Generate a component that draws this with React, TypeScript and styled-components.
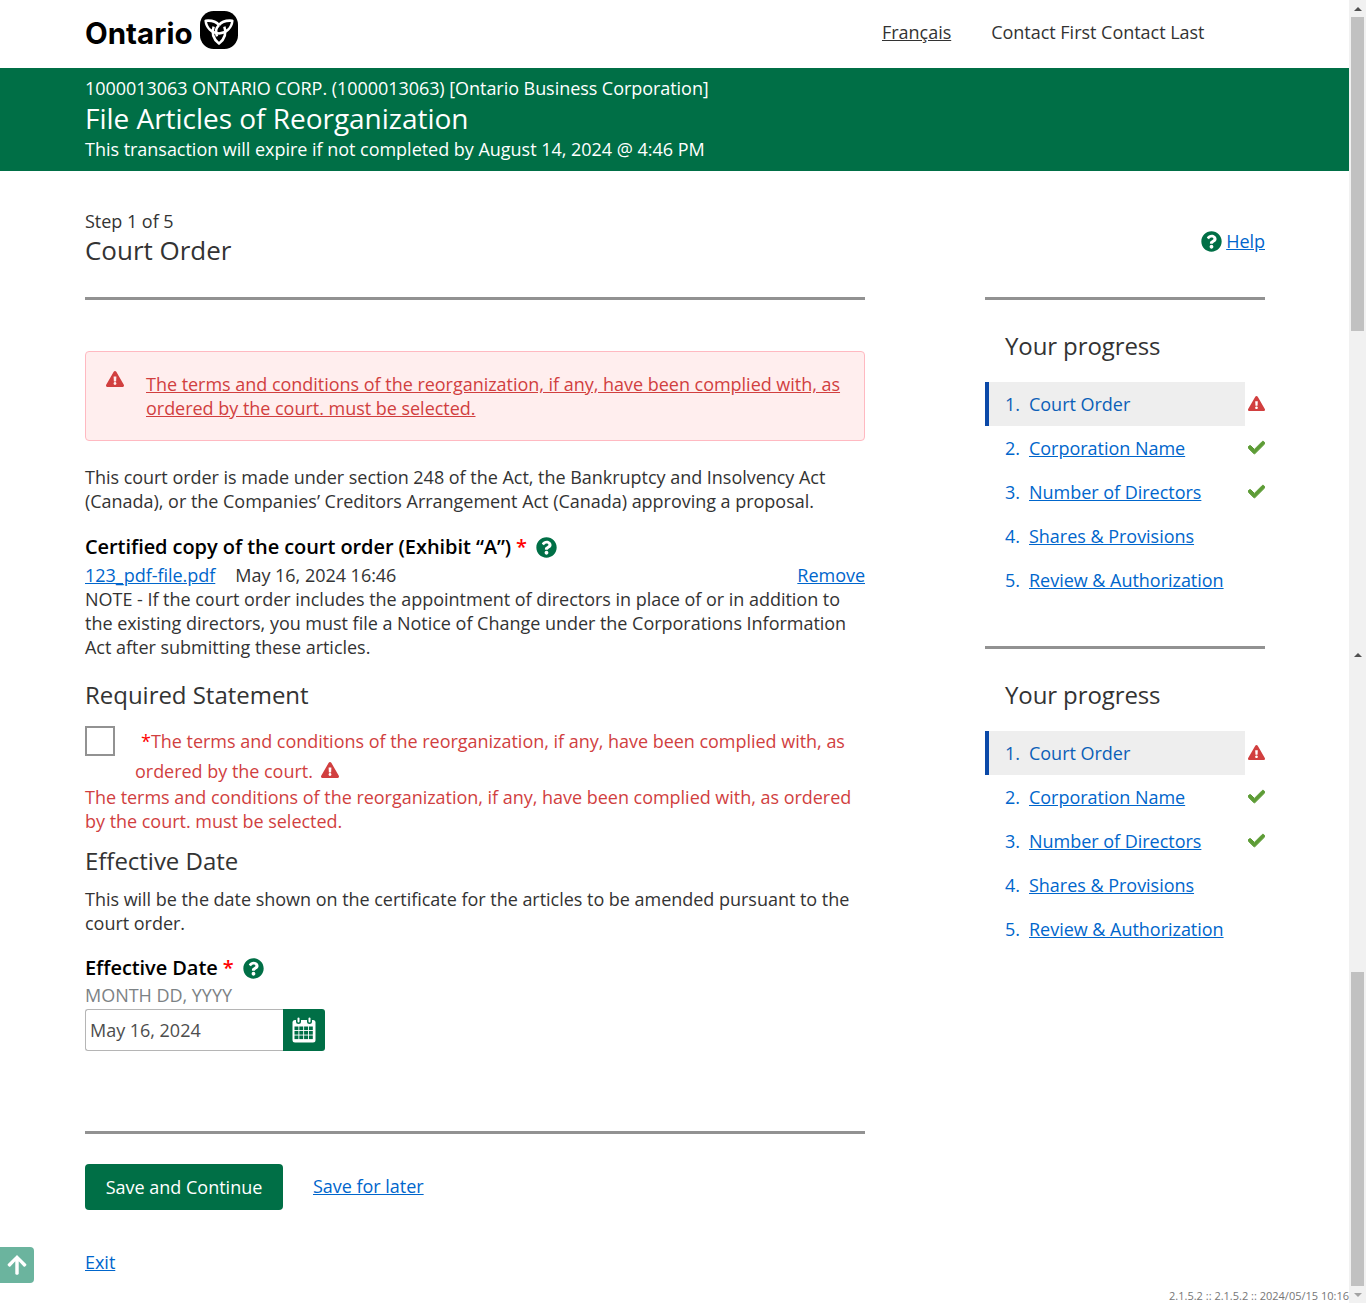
import React from "react";
import styled, {createGlobalStyle} from "styled-components";
import {FaArrowUp, FaCheck, FaExclamationTriangle, FaQuestionCircle} from "react-icons/fa";

const GlobalStyle = createGlobalStyle`
  html, body {
    margin: 0;
    padding: 0;
    background: #FFFFFF;
    overflow: hidden;
  }

  body {
    font-family: 'Open Sans', sans-serif;
    font-size: 18px;
    line-height: 24px;
    letter-spacing: -0.025px;
    color: #333333;
  }

  a {
    color: #0066cc;
  }
`

const Page = styled('div')`
  position: relative;
  display: flex;
  width: 1366px;
  height: 1303px;
  overflow: hidden;
`

const Main = styled('div')`
  width: 1349px;
  flex: none;
`

const ScrollTrack = styled('div')`
  width: 17px;
  flex: none;
  height: 1303px;
  background: #f1f1f1;
  display: flex;
  flex-direction: column;
`

const ScrollArrow = styled('div')<{ $down?: boolean }>`
  height: 17px;
  flex: none;
  display: flex;
  align-items: center;
  justify-content: center;

  &::before {
    content: '';
    border-left: 4px solid transparent;
    border-right: 4px solid transparent;
    ${props => props.$down ? 'border-top: 4px solid #a3a3a3;' : 'border-bottom: 4px solid #505050;'}
  }
`

const ScrollThumb = styled('div')`
  height: 314px;
  flex: none;
  margin: 0 2px;
  background: #c1c1c1;
`

const ScrollGap = styled('div')<{ $height: number }>`
  height: ${props => props.$height}px;
  flex: none;
`

const Header = styled('header')`
  height: 68px;
  padding-left: 85px;
  display: flex;
  align-items: center;
  justify-content: space-between;
  box-sizing: border-box;
`

const Logo = styled('div')`
  display: flex;
  align-items: center;
  gap: 7px;
  margin-top: -8px;
`

const LogoText = styled('span')`
  font-family: 'Inter', sans-serif;
  font-weight: 700;
  font-size: 29.5px;
  line-height: 40px;
  letter-spacing: 0;
  color: #000000;
  margin-top: 5px;
`

const HeaderLinks = styled('nav')`
  display: flex;
  gap: 40px;
  padding-right: 144.5px;
  margin-top: -4px;
`

const LangLink = styled('a')`
  color: #333333;
`

const Banner = styled('div')`
  height: 103px;
  background: #006f46;
  color: #FFFFFF;
  padding: 8px 0 0 85px;
  box-sizing: border-box;
`

const BannerLine = styled('div')<{ $tight?: boolean }>`
  line-height: 24px;
  letter-spacing: ${props => props.$tight ? '-0.05px' : '-0.025px'};
`

const BannerTitle = styled('div')`
  font-size: 28px;
  line-height: 37px;
`

const Content = styled('div')`
  display: grid;
  grid-template-columns: 780px 280px;
  column-gap: 120px;
  padding-left: 85px;
`

const StepHead = styled('div')`
  grid-column: 1 / 3;
  display: flex;
  justify-content: space-between;
  align-items: center;
  padding-top: 39px;
  height: 126px;
  box-sizing: border-box;
`

const StepTitle = styled('h1')`
  margin: 0;
  font-size: 26px;
  line-height: 34px;
  font-weight: 400;
`

const StepText = styled('div')`
  margin-bottom: 31px;
`

const HelpLink = styled('div')`
  display: flex;
  align-items: center;
  gap: 4px;
  margin-bottom: 25px;
`

const Rule = styled('hr')<{ $top?: number }>`
  margin: ${props => props.$top ?? 0}px 0 0;
  border: none;
  height: 3px;
  background: #929292;
`

const AlertIcon = styled(FaExclamationTriangle)`
  flex: none;
  width: 18px;
  height: 18px;
  margin: -2px 1px 0 0;
  color: #d13f3f;
`

const Alert = styled('div')`
  margin-top: 51px;
  height: 90px;
  box-sizing: border-box;
  display: flex;
  gap: 21px;
  padding: 20px 20px 0;
  background: #ffeeee;
  border: 1px solid #ffb9c1;
  border-radius: 4px;
`

const AlertLink = styled('a')`
  color: #d13f3f;
  text-decoration-color: #d13f3f;
`

const Paragraph = styled('p')<{ $top?: number }>`
  margin: ${props => props.$top ?? 0}px 0 0;
`

const FieldLabel = styled('div')<{ $top: number }>`
  margin-top: ${props => props.$top}px;
  display: flex;
  align-items: center;
  height: 28px;
  font-size: 20px;
  line-height: 24px;
  font-weight: 600;
  letter-spacing: -0.07px;
  color: #000000;
`

const Star = styled('span')`
  color: #ff0000;
  margin: 0 9px 0 5px;
`

const FileRow = styled('div')`
  display: flex;
  gap: 20px;
  margin-top: 2px;
`

const RemoveLink = styled('a')`
  margin-left: auto;
`

const SectionTitle = styled('h2')<{ $top: number }>`
  margin: ${props => props.$top}px 0 0;
  font-size: 24px;
  line-height: 32px;
  font-weight: 400;
`

const CheckRow = styled('div')`
  display: flex;
  margin-top: 15px;
  margin-bottom: -1px;
`

const CheckBoxMark = styled('span')`
  width: 30px;
  height: 30px;
  flex: none;
  box-sizing: border-box;
  border: 2px solid #929292;
  background: #FFFFFF;
`

const CheckText = styled('div')`
  color: #d13f3f;
  line-height: 30px;
  padding-left: 20px;
  text-indent: 6px;
`

const InlineStar = styled('span')`
  color: #ff0000;
`

const InlineIcon = styled('span')`
  display: inline-block;
  text-indent: 0;
  margin-left: 8px;
  vertical-align: -1px;
  color: #d13f3f;
  font-size: 18px;
  line-height: 18px;
`

const ErrorText = styled('div')`
  color: #d13f3f;
  line-height: 24px;
`

const DateHint = styled('div')`
  color: #7c8285;
  line-height: 26px;
  margin-bottom: 1px;
`

const DateField = styled('div')`
  display: flex;
  width: 240px;
  height: 42px;
`

const DateValue = styled('div')`
  flex: 1;
  box-sizing: border-box;
  border: 1px solid #b5b5b5;
  border-right: none;
  border-radius: 3px 0 0 3px;
  padding: 8px 4px;
  color: #4d4d4d;
`

const DateButton = styled('div')`
  width: 42px;
  background: #006f46;
  border-radius: 0 3px 3px 0;
  display: flex;
  align-items: center;
  justify-content: center;
`

const SaveRow = styled('div')`
  margin-top: 30px;
  display: flex;
  align-items: center;
  gap: 30px;
`

const SaveLink = styled('a')`
  margin-bottom: 2px;
`

const SaveButton = styled('button')`
  height: 46px;
  width: 198px;
  border: none;
  border-radius: 4px;
  background: #006f46;
  color: #FFFFFF;
  font-family: 'Open Sans', sans-serif;
  font-size: 18px;
  font-weight: 500;
`

const ExitRow = styled('div')`
  margin-top: 40px;
`

const Side = styled('aside')`
  display: flex;
  flex-direction: column;
`

const ProgressPanel = styled('div')`
  height: 349px;
`

const ProgressTitle = styled('h2')`
  margin: 0;
  padding: 30px 0 0 20px;
  font-size: 24px;
  line-height: 32px;
  font-weight: 400;
  letter-spacing: -0.1px;
`

const ProgressList = styled('ol')`
  list-style: none;
  margin: 20px 0 0;
  padding: 0;
`

const ProgressItem = styled('li')`
  display: flex;
  align-items: center;
  height: 44px;
`

const ProgressLabel = styled('div')<{ $active?: boolean }>`
  width: 260px;
  height: 44px;
  box-sizing: border-box;
  display: flex;
  align-items: center;
  gap: 9px;
  padding-left: ${props => props.$active ? '16px' : '20px'};
  background: ${props => props.$active ? '#eeeeee' : 'transparent'};
  border-left: ${props => props.$active ? '4px solid #0b49a8' : 'none'};
  color: ${props => props.$active ? '#0b5fb8' : '#0066cc'};
`

const ProgressStatus = styled('span')<{ $error?: boolean }>`
  display: flex;
  justify-content: flex-end;
  width: 20px;
  font-size: 17px;
  padding-bottom: 2px;
  color: ${props => props.$error ? '#d13f3f' : '#5d9c36'};

  svg {
    stroke: currentColor;
    stroke-width: ${props => props.$error ? 0 : 30};
  }
`

const BackToTop = styled('div')`
  position: absolute;
  left: 0;
  top: 1247px;
  width: 34px;
  height: 36px;
  border-radius: 0 4px 4px 0;
  background: #6bb49e;
  color: #FFFFFF;
  display: flex;
  align-items: center;
  justify-content: center;
  font-size: 22px;
`

const VersionText = styled('div')`
  position: absolute;
  right: 17px;
  top: 1288px;
  font-size: 11px;
  line-height: 15px;
  letter-spacing: 0;
  color: #767676;
`

const steps = ['Court Order', 'Corporation Name', 'Number of Directors', 'Shares & Provisions', 'Review & Authorization'];

function Trillium() {
    return (
        <svg width="38" height="38" viewBox="0 0 39 39" aria-hidden="true">
            <rect width="39" height="39" rx="14" fill="#000000"/>
            <g fill="none" stroke="#FFFFFF" strokeWidth="2.600" strokeLinejoin="round">
                <path d="M19.500 23C12 22.500 6.500 17.500 5.800 10C11.500 9.500 16.500 10.500 19.500 14.500"/>
                <path d="M19.500 23C27 22.500 32.500 17.500 33.200 10C27.500 9.500 22.500 10.500 19.500 14.500"/>
                <path d="M14 16C11.500 23 14 29 19.500 33.500C25 29 27.500 23 25 16"/>
                <path d="M19.500 14.500C16.500 17.500 15.500 20 17.500 26"/>
            </g>
        </svg>
    );
}

function CalendarIcon() {
    return (
        <svg width="24" height="26" viewBox="0 0 24 26" aria-hidden="true">
            <rect x="0.500" y="3" width="23" height="22.500" rx="2.500" fill="#FFFFFF"/>
            <g fill="#006f46">
                {[9.500, 14, 18.500].map(y => [2.500, 7.300, 12.100, 16.900].map(x => (
                    <rect key={`${x}-${y}`} x={x} y={y} width="3.900" height="3.600"/>
                )))}
                <rect x="4" y="0.500" width="5" height="6.500" rx="2.500"/>
                <rect x="15" y="0.500" width="5" height="6.500" rx="2.500"/>
            </g>
            <rect x="5.500" y="0.500" width="2" height="5" rx="1" fill="#FFFFFF"/>
            <rect x="16.500" y="0.500" width="2" height="5" rx="1" fill="#FFFFFF"/>
        </svg>
    );
}

function Progress() {
    return (
        <ProgressPanel>
            <Rule/>
            <ProgressTitle>Your progress</ProgressTitle>
            <ProgressList>
                {steps.map((step, index) => (
                    <ProgressItem key={step}>
                        <ProgressLabel $active={index === 0}>
                            <span>{index + 1}.</span>
                            {index === 0 ? <span>{step}</span> : <a href="#">{step}</a>}
                        </ProgressLabel>
                        {index === 0 && <ProgressStatus $error><FaExclamationTriangle/></ProgressStatus>}
                        {(index === 1 || index === 2) && <ProgressStatus><FaCheck/></ProgressStatus>}
                    </ProgressItem>
                ))}
            </ProgressList>
        </ProgressPanel>
    );
}

export default function App() {
    return (
        <Page>
            <GlobalStyle/>
            <Main>
                <Header>
                    <Logo>
                        <LogoText>Ontario</LogoText>
                        <Trillium/>
                    </Logo>
                    <HeaderLinks>
                        <LangLink href="#">Français</LangLink>
                        <span>Contact First Contact Last</span>
                    </HeaderLinks>
                </Header>
                <Banner>
                    <BannerLine $tight>1000013063 ONTARIO CORP. (1000013063) [Ontario Business Corporation]</BannerLine>
                    <BannerTitle>File Articles of Reorganization</BannerTitle>
                    <BannerLine>This transaction will expire if not completed by August 14, 2024 @ 4:46 PM</BannerLine>
                </Banner>
                <Content>
                    <StepHead>
                        <StepText>
                            <div>Step 1 of 5</div>
                            <StepTitle>Court Order</StepTitle>
                        </StepText>
                        <HelpLink>
                            <FaQuestionCircle color="#006f46" size={21}/>
                            <a href="#">Help</a>
                        </HelpLink>
                    </StepHead>
                    <div>
                        <Rule/>
                        <Alert>
                            <AlertIcon/>
                            <AlertLink href="#">
                                The terms and conditions of the reorganization, if any, have been complied with, as
                                ordered by the court. must be selected.
                            </AlertLink>
                        </Alert>
                        <Paragraph $top={24}>
                            This court order is made under section 248 of the Act, the Bankruptcy and Insolvency Act
                            (Canada), or the Companies’ Creditors Arrangement Act (Canada) approving a proposal.
                        </Paragraph>
                        <FieldLabel $top={20}>
                            Certified copy of the court order (Exhibit “A”)
                            <Star>*</Star>
                            <FaQuestionCircle color="#006f46" size={21}/>
                        </FieldLabel>
                        <FileRow>
                            <a href="#">123_pdf-file.pdf</a>
                            <span>May 16, 2024 16:46</span>
                            <RemoveLink href="#">Remove</RemoveLink>
                        </FileRow>
                        <Paragraph>
                            NOTE - If the court order includes the appointment of directors in place of or in addition
                            to the existing directors, you must file a Notice of Change under the Corporations
                            Information Act after submitting these articles.
                        </Paragraph>
                        <SectionTitle $top={20}>Required Statement</SectionTitle>
                        <CheckRow>
                            <CheckBoxMark/>
                            <CheckText>
                                <InlineStar>*</InlineStar>The terms and conditions of the reorganization, if any, have
                                been complied with, as ordered by the court.
                                <InlineIcon><FaExclamationTriangle/></InlineIcon>
                            </CheckText>
                        </CheckRow>
                        <ErrorText>
                            The terms and conditions of the reorganization, if any, have been complied with, as ordered
                            by the court. must be selected.
                        </ErrorText>
                        <SectionTitle $top={12}>Effective Date</SectionTitle>
                        <Paragraph $top={10}>
                            This will be the date shown on the certificate for the articles to be amended pursuant to
                            the court order.
                        </Paragraph>
                        <FieldLabel $top={19}>
                            Effective Date
                            <Star>*</Star>
                            <FaQuestionCircle color="#006f46" size={21}/>
                        </FieldLabel>
                        <DateHint>MONTH DD, YYYY</DateHint>
                        <DateField>
                            <DateValue>May 16, 2024</DateValue>
                            <DateButton><CalendarIcon/></DateButton>
                        </DateField>
                        <Rule $top={80}/>
                        <SaveRow>
                            <SaveButton>Save and Continue</SaveButton>
                            <SaveLink href="#">Save for later</SaveLink>
                        </SaveRow>
                        <ExitRow><a href="#">Exit</a></ExitRow>
                    </div>
                    <Side>
                        <Progress/>
                        <Progress/>
                    </Side>
                </Content>
            </Main>
            <ScrollTrack>
                <ScrollArrow/>
                <ScrollThumb/>
                <ScrollGap $height={315}/>
                <ScrollArrow/>
                <ScrollGap $height={309}/>
                <ScrollThumb/>
                <ScrollArrow $down/>
            </ScrollTrack>
            <BackToTop><FaArrowUp/></BackToTop>
            <VersionText>2.1.5.2 :: 2.1.5.2 :: 2024/05/15 10:16</VersionText>
        </Page>
    );
}
